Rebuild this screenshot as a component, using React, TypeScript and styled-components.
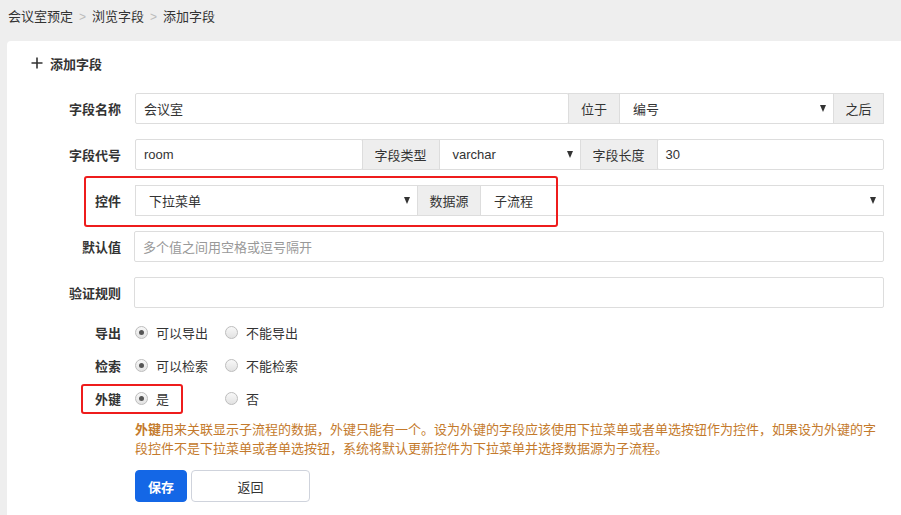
import React from "react";
import styled, { createGlobalStyle } from "styled-components";

const Global = createGlobalStyle`
  html, body { margin: 0; padding: 0; background: #eeeeee; }
  body { font-family: "Liberation Sans", "Noto Sans CJK SC", sans-serif; font-size: 13px; color: #333; }
  * { box-sizing: border-box; }
`;

const Page = styled.div`
  width: 901px;
  height: 515px;
  overflow: hidden;
  background: #eeeeee;
`;

const Breadcrumb = styled.div`
  height: 41px;
  display: flex;
  align-items: flex-start;
  padding: 8px 0 0 8px;
  gap: 6px;
  line-height: 18px;
  color: #333;
`;

const Sep = styled.span`
  color: #bbb;
  font-size: 12px;
`;

const Card = styled.div`
  margin-left: 7px;
  background: #fff;
  border-radius: 4px 0 0 0;
  height: 474px;
  padding: 12px 17px 0 0;
`;

const Header = styled.div`
  display: flex;
  align-items: center;
  height: 20px;
  padding-left: 24px;
  gap: 7px;
  font-weight: bold;
  color: #333;
  margin-bottom: 20px;
`;

const Row = styled.div<{ $mb?: number; $h?: number }>`
  position: relative;
  display: grid;
  grid-template-columns: 114px 1fr;
  column-gap: 14px;
  align-items: center;
  height: ${(p) => p.$h ?? 31}px;
  margin-bottom: ${(p) => p.$mb ?? 15}px;
`;

const Label = styled.div`
  text-align: right;
  font-weight: bold;
  color: #333;
`;

const Group = styled.div`
  display: flex;
  height: 31px;
`;

const Input = styled.div<{ $w?: number; $placeholder?: boolean }>`
  ${(p) => (p.$w ? `width: ${p.$w}px; flex: none;` : "flex: 1;")}
  height: 31px;
  border: 1px solid #dddddd;
  border-radius: 2px;
  margin-left: -1px;
  &:first-child { margin-left: 0; }
  display: flex;
  align-items: center;
  padding-left: 8px;
  color: ${(p) => (p.$placeholder ? "#999" : "#333")};
  background: #fff;
`;

const Select = styled.div<{ $w?: number }>`
  ${(p) => (p.$w ? `width: ${p.$w}px; flex: none;` : "flex: 1;")}
  height: 31px;
  border: 1px solid #dddddd;
  margin-left: -1px;
  &:first-child { margin-left: 0; }
  display: flex;
  align-items: center;
  justify-content: space-between;
  padding: 0 7px 0 13px;
  color: #333;
  background: #fff;
`;

const Arrow = styled.span`
  width: 0;
  height: 0;
  border-left: 3.5px solid transparent;
  border-right: 3.5px solid transparent;
  border-top: 7px solid #333;
`;

const Addon = styled.div<{ $w: number }>`
  width: ${(p) => p.$w}px;
  flex: none;
  height: 31px;
  margin-left: -1px;
  background: #eeeeee;
  border: 1px solid #dddddd;
  display: flex;
  align-items: center;
  justify-content: center;
  color: #333;
`;

const Radios = styled.div`
  display: flex;
  align-items: center;
`;

const Option = styled.label`
  width: 90px;
  display: flex;
  align-items: center;
  gap: 8px;
  color: #333;
`;

const RadioDot = styled.span<{ $on?: boolean }>`
  width: 13px;
  height: 13px;
  border-radius: 50%;
  border: 1px solid #bdbdbd;
  background: linear-gradient(#f8f8f8, #e2e2e2);
  display: inline-flex;
  align-items: center;
  justify-content: center;
  &::after {
    content: "";
    width: 5px;
    height: 5px;
    border-radius: 50%;
    background: ${(p) => (p.$on ? "#555" : "transparent")};
  }
`;

const Mark = styled.div<{ $l: number; $t: number; $w: number; $h: number }>`
  position: absolute;
  left: ${(p) => p.$l}px;
  top: ${(p) => p.$t}px;
  width: ${(p) => p.$w}px;
  height: ${(p) => p.$h}px;
  border: 2px solid #ee1c1c;
  border-radius: 3px;
  pointer-events: none;
`;

const Help = styled.div`
  margin: 5px 0 0 128px;
  width: 750px;
  line-height: 19px;
  color: #c47a2c;
`;

const Strong = styled.strong`
  font-weight: bold;
`;

const Actions = styled.div`
  margin: 12px 0 0 128px;
  display: flex;
  gap: 4px;
`;

const Button = styled.button<{ $primary?: boolean; $w: number }>`
  width: ${(p) => p.$w}px;
  height: 32px;
  border-radius: 4px;
  font-family: inherit;
  font-size: 13px;
  font-weight: ${(p) => (p.$primary ? "bold" : "normal")};
  color: ${(p) => (p.$primary ? "#fff" : "#333")};
  background: ${(p) => (p.$primary ? "#1467e6" : "#fff")};
  border: 1px solid ${(p) => (p.$primary ? "#1467e6" : "#cfd3dc")};
`;

const Plus = () => (
  <svg width="12" height="12" viewBox="0 0 12 12">
    <path d="M6 0.5V11.5M0.5 6H11.5" stroke="#333" strokeWidth="1.6" />
  </svg>
);

export default function App() {
  return (
    <Page>
      <Global />
      <Breadcrumb>
        <span>会议室预定</span>
        <Sep>&gt;</Sep>
        <span>浏览字段</span>
        <Sep>&gt;</Sep>
        <span>添加字段</span>
      </Breadcrumb>
      <Card>
        <Header>
          <Plus />
          <span>添加字段</span>
        </Header>

        <Row>
          <Label>字段名称</Label>
          <Group>
            <Input>会议室</Input>
            <Addon $w={52}>位于</Addon>
            <Select $w={215}>
              编号
              <Arrow />
            </Select>
            <Addon $w={51}>之后</Addon>
          </Group>
        </Row>

        <Row>
          <Label>字段代号</Label>
          <Group>
            <Input>room</Input>
            <Addon $w={78}>字段类型</Addon>
            <Select $w={142}>
              varchar
              <Arrow />
            </Select>
            <Addon $w={78}>字段长度</Addon>
            <Input>30</Input>
          </Group>
        </Row>

        <Row>
          <Label>控件</Label>
          <Group>
            <Select $w={283}>
              下拉菜单
              <Arrow />
            </Select>
            <Addon $w={64}>数据源</Addon>
            <Select>
              子流程
              <Arrow />
            </Select>
          </Group>
          <Mark $l={77} $t={-9} $w={474} $h={51} />
        </Row>

        <Row>
          <Label>默认值</Label>
          <Input $placeholder>多个值之间用空格或逗号隔开</Input>
        </Row>

        <Row $mb={8}>
          <Label>验证规则</Label>
          <Input />
        </Row>

        <Row $h={33} $mb={0}>
          <Label>导出</Label>
          <Radios>
            <Option><RadioDot $on />可以导出</Option>
            <Option><RadioDot />不能导出</Option>
          </Radios>
        </Row>

        <Row $h={33} $mb={0}>
          <Label>检索</Label>
          <Radios>
            <Option><RadioDot $on />可以检索</Option>
            <Option><RadioDot />不能检索</Option>
          </Radios>
        </Row>

        <Row $h={33} $mb={0}>
          <Label>外键</Label>
          <Radios>
            <Option><RadioDot $on />是</Option>
            <Option><RadioDot />否</Option>
          </Radios>
          <Mark $l={74} $t={2} $w={102} $h={30} />
        </Row>

        <Help>
          <Strong>外键</Strong>用来关联显示子流程的数据，外键只能有一个。设为外键的字段应该使用下拉菜单或者单选按钮作为控件，如果设为外键的字段控件不是下拉菜单或者单选按钮，系统将默认更新控件为下拉菜单并选择数据源为子流程。
        </Help>

        <Actions>
          <Button $primary $w={52}>保存</Button>
          <Button $w={119}>返回</Button>
        </Actions>
      </Card>
    </Page>
  );
}
